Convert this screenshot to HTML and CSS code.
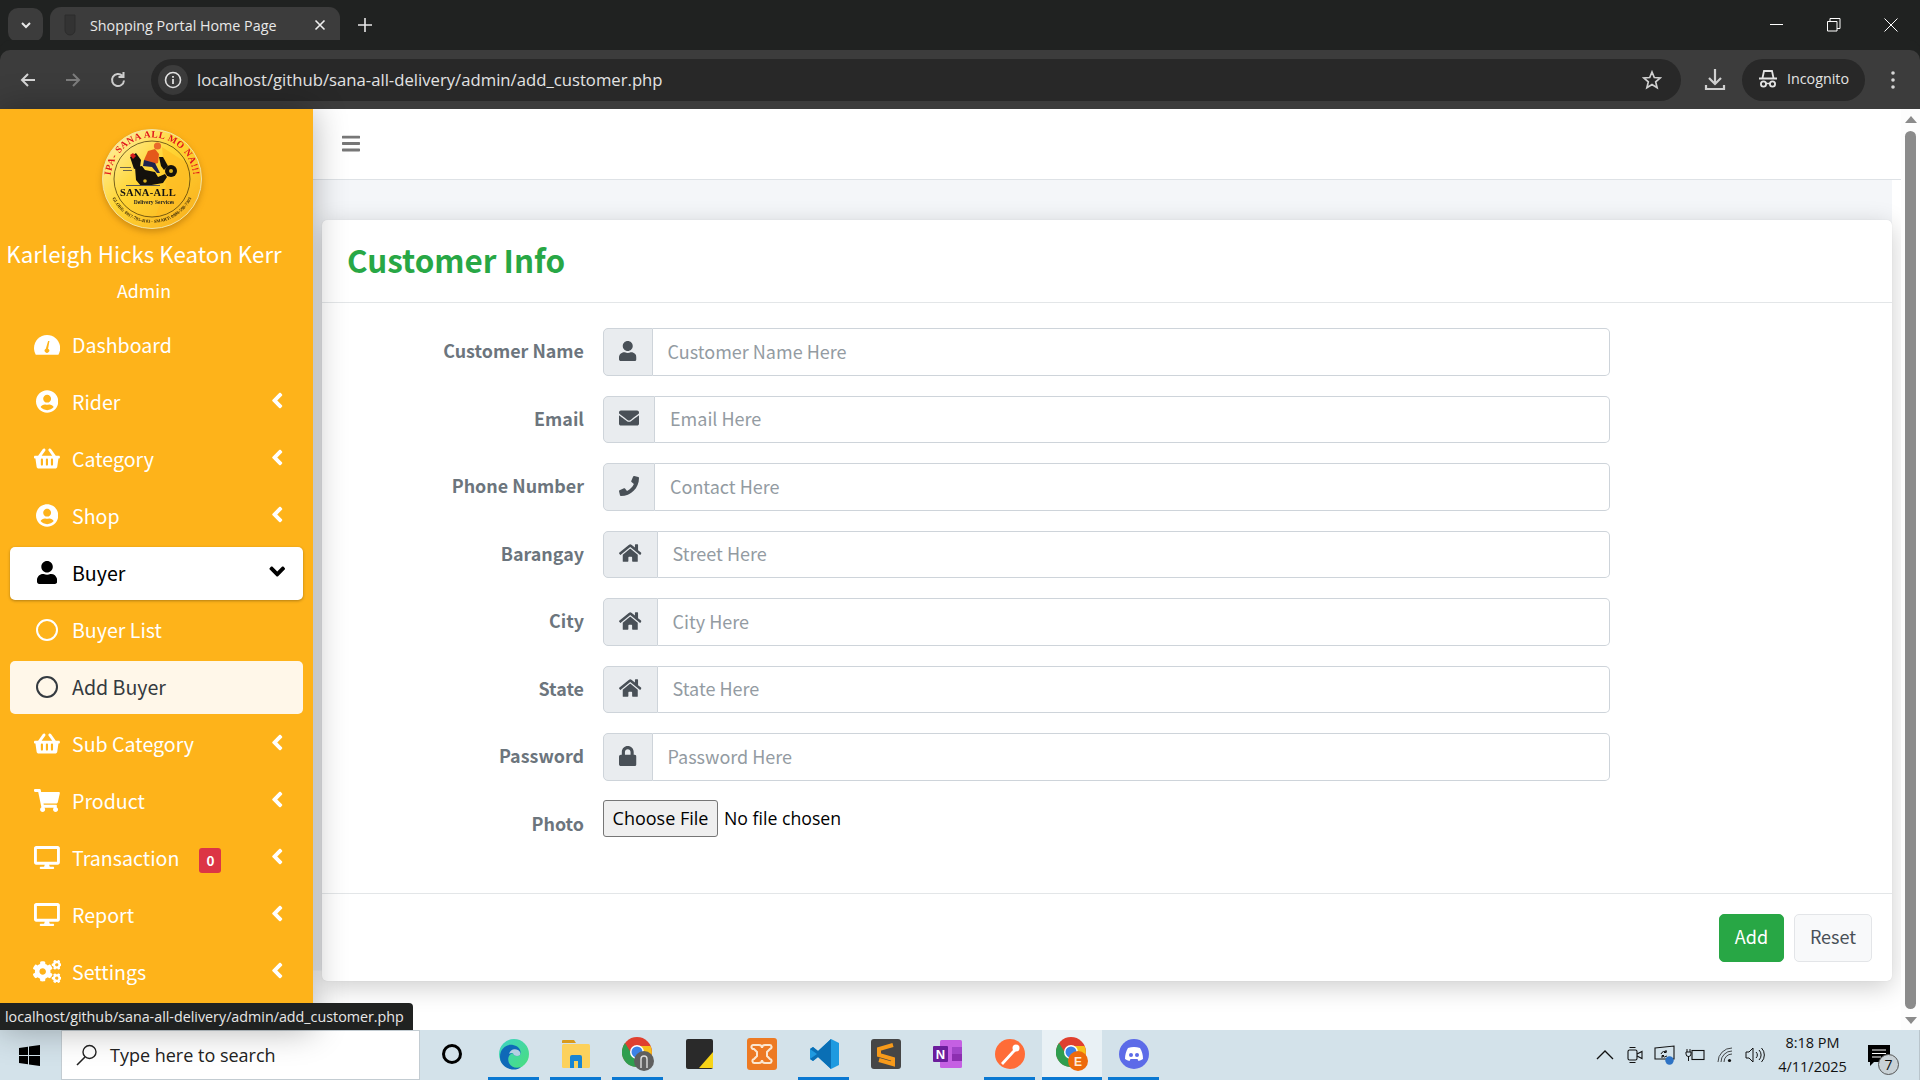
FILE: index.html
```html
<!DOCTYPE html>
<html lang="en">
<head>
  <meta charset="UTF-8" />
  <title>Shopping Portal Home Page</title>
  <link rel="stylesheet" href="styles.css">
</head>
<body>
  <svg class="sprite" aria-hidden="true">
    <symbol id="i-user"><path d="M224 256c70.7 0 128-57.3 128-128S294.7 0 224 0 96 57.3 96 128s57.3 128 128 128zm89.6 32h-16.7c-22.2 10.2-46.9 16-72.9 16s-50.6-5.8-72.9-16h-16.7C60.2 288 0 348.2 0 422.4V464c0 26.5 21.5 48 48 48h352c26.5 0 48-21.5 48-48v-41.6c0-74.2-60.2-134.4-134.4-134.4z"/></symbol>
    <symbol id="i-envelope"><path d="M502.3 190.8c3.9-3.1 9.7-.2 9.7 4.7V400c0 26.5-21.5 48-48 48H48c-26.5 0-48-21.5-48-48V195.6c0-5 5.7-7.8 9.7-4.7 22.4 17.4 52.1 39.5 154.1 113.6 21.1 15.4 56.7 47.8 92.2 47.6 35.7.3 72-32.8 92.3-47.6 102-74.1 131.6-96.3 154-113.7zM256 320c23.2.4 56.6-29.2 73.4-41.4 132.7-96.3 142.8-104.7 173.4-128.7 5.8-4.5 9.2-11.5 9.2-18.9v-19c0-26.5-21.5-48-48-48H48C21.5 64 0 85.5 0 112v19c0 7.4 3.4 14.3 9.2 18.9 30.6 23.9 40.7 32.4 173.4 128.7 16.8 12.2 50.2 41.8 73.4 41.4z"/></symbol>
    <symbol id="i-phone"><path d="M493.4 24.6l-104-24c-11.3-2.6-22.9 3.3-27.5 13.9l-48 112c-4.2 9.8-1.4 21.3 6.9 28l60.6 49.6c-36 76.7-98.9 140.5-177.2 177.2l-49.6-60.6c-6.8-8.3-18.2-11.1-28-6.9l-112 48C3.9 366.5-2 378.1.6 389.4l24 104C27.1 504.2 36.7 512 48 512c256.1 0 464-207.5 464-464 0-11.2-7.7-20.9-18.6-23.4z"/></symbol>
    <symbol id="i-home"><path d="M280.37 148.26L96 300.11V464a16 16 0 0 0 16 16l112.06-.29a16 16 0 0 0 15.92-16V368a16 16 0 0 1 16-16h64a16 16 0 0 1 16 16v95.64a16 16 0 0 0 16 16.05L464 480a16 16 0 0 0 16-16V300L295.67 148.26a12.19 12.19 0 0 0-15.3 0zM571.6 251.47L488 182.56V44.05a12 12 0 0 0-12-12h-56a12 12 0 0 0-12 12v72.61L318.47 43a48 48 0 0 0-61 0L4.34 251.47a12 12 0 0 0-1.6 16.9l25.5 31A12 12 0 0 0 45.15 301l235.22-193.74a12.19 12.19 0 0 1 15.3 0L530.9 301a12 12 0 0 0 16.9-1.6l25.5-31a12 12 0 0 0-1.7-16.93z"/></symbol>
    <symbol id="i-lock"><path d="M400 224h-24v-72C376 68.2 307.8 0 224 0S72 68.2 72 152v72H48c-26.5 0-48 21.5-48 48v192c0 26.5 21.5 48 48 48h352c26.5 0 48-21.5 48-48V272c0-26.5-21.5-48-48-48zm-104 0H152v-72c0-39.7 32.3-72 72-72s72 32.3 72 72v72z"/></symbol>
    <symbol id="i-user-circle"><path d="M248 8C111 8 0 119 0 256s111 248 248 248 248-111 248-248S385 8 248 8zm0 96c48.6 0 88 39.4 88 88s-39.4 88-88 88-88-39.4-88-88 39.4-88 88-88zm0 344c-58.7 0-111.3-26.6-146.5-68.2 18.8-35.4 55.6-59.8 98.5-59.8 2.4 0 4.8.4 7.1 1.1 13 4.2 26.6 6.9 40.9 6.9 14.3 0 28-2.7 40.9-6.9 2.3-.7 4.7-1.1 7.1-1.1 42.9 0 79.7 24.4 98.5 59.8C359.3 421.4 306.7 448 248 448z"/></symbol>
    <symbol id="i-basket"><path d="M576 216v16c0 13.255-10.745 24-24 24h-8l-26.113 182.788C514.509 462.435 494.257 480 470.37 480H105.63c-23.887 0-44.139-17.565-47.518-41.212L32 256h-8c-13.255 0-24-10.745-24-24v-16c0-13.255 10.745-24 24-24h67.341l106.78-146.821c10.395-14.292 30.407-17.453 44.701-7.058 14.293 10.395 17.453 30.408 7.058 44.701L170.477 192h235.046L326.12 82.821c-10.395-14.292-7.234-34.306 7.059-44.701 14.291-10.395 34.306-7.235 44.701 7.058L484.659 192H552c13.255 0 24 10.745 24 24zM312 392V280c0-13.255-10.745-24-24-24s-24 10.745-24 24v112c0 13.255 10.745 24 24 24s24-10.745 24-24zm112 0V280c0-13.255-10.745-24-24-24s-24 10.745-24 24v112c0 13.255 10.745 24 24 24s24-10.745 24-24zm-224 0V280c0-13.255-10.745-24-24-24s-24 10.745-24 24v112c0 13.255 10.745 24 24 24s24-10.745 24-24z"/></symbol>
    <symbol id="i-cart"><path d="M528.12 301.319l47.273-208C578.806 78.301 567.391 64 551.99 64H159.208l-9.166-44.81C147.758 8.021 137.93 0 126.529 0H24C10.745 0 0 10.745 0 24v16c0 13.255 10.745 24 24 24h69.883l70.248 343.435C147.325 417.1 136 435.222 136 456c0 30.928 25.072 56 56 56s56-25.072 56-56c0-15.674-6.447-29.835-16.824-40h209.647C430.447 426.165 424 440.326 424 456c0 30.928 25.072 56 56 56s56-25.072 56-56c0-22.172-12.888-41.332-31.579-50.405l5.517-24.276c3.413-15.018-8.002-29.319-23.403-29.319H218.117l-6.545-32h293.145c11.206 0 20.92-7.754 23.403-18.681z"/></symbol>
    <symbol id="i-desktop"><path d="M528 0H48C21.5 0 0 21.5 0 48v320c0 26.5 21.5 48 48 48h192l-16 48h-72c-13.3 0-24 10.7-24 24s10.7 24 24 24h272c13.3 0 24-10.7 24-24s-10.7-24-24-24h-72l-16-48h192c26.5 0 48-21.5 48-48V48c0-26.5-21.5-48-48-48zm-16 352H64V64h448v288z"/></symbol>
    <symbol id="i-cogs"><path d="M512.1 191l-8.2 14.3c-3 5.3-9.4 7.5-15.1 5.4-11.8-4.4-22.6-10.7-32.1-18.6-4.6-3.8-5.8-10.5-2.8-15.7l8.2-14.3c-6.9-8-12.3-17.3-15.9-27.4h-16.5c-6 0-11.2-4.3-12.2-10.3-2-12-2.1-24.6 0-37.1 1-6 6.2-10.4 12.2-10.4h16.5c3.6-10.1 9-19.4 15.9-27.4l-8.2-14.3c-3-5.2-1.9-11.9 2.8-15.7 9.5-7.9 20.4-14.2 32.1-18.6 5.7-2.1 12.1.1 15.1 5.4l8.2 14.3c10.5-1.9 21.2-1.9 31.7 0L552 6.3c3-5.3 9.4-7.5 15.1-5.4 11.8 4.4 22.6 10.7 32.1 18.6 4.6 3.8 5.8 10.5 2.8 15.7l-8.2 14.3c6.9 8 12.3 17.3 15.9 27.4h16.5c6 0 11.2 4.3 12.2 10.3 2 12 2.1 24.6 0 37.1-1 6-6.2 10.4-12.2 10.4h-16.5c-3.6 10.1-9 19.4-15.9 27.4l8.2 14.3c3 5.2 1.9 11.9-2.8 15.7-9.5 7.9-20.4 14.2-32.1 18.6-5.7 2.1-12.1-.1-15.1-5.4l-8.2-14.3c-10.4 1.9-21.2 1.9-31.7 0zm-10.5-58.8c38.5 29.6 82.4-14.3 52.8-52.8-38.5-29.7-82.4 14.3-52.8 52.8zM386.3 286.1l33.7 16.8c10.1 5.8 14.5 18.1 10.5 29.1-8.9 24.2-26.4 46.4-42.6 65.8-7.4 8.9-20.2 11.1-30.3 5.3l-29.1-16.8c-16 13.7-34.6 24.6-54.9 31.7v33.6c0 11.6-8.3 21.6-19.7 23.6-24.6 4.2-50.4 4.4-75.9 0-11.5-2-20-11.9-20-23.6V418c-20.3-7.2-38.9-18-54.9-31.7L74 403c-10 5.8-22.9 3.6-30.3-5.3-16.2-19.4-33.3-41.6-42.2-65.7-4-10.9.4-23.2 10.5-29.1l33.3-16.8c-3.9-20.9-3.9-42.4 0-63.4L12 205.8c-10.1-5.8-14.6-18.1-10.5-29 8.9-24.2 26-46.4 42.2-65.8 7.4-8.9 20.2-11.1 30.3-5.3l29.1 16.8c16-13.7 34.6-24.6 54.9-31.7V57.1c0-11.5 8.2-21.5 19.6-23.5 24.6-4.2 50.5-4.4 76-.1 11.5 2 20 11.9 20 23.6v33.6c20.3 7.2 38.9 18 54.9 31.7l29.1-16.8c10-5.8 22.9-3.6 30.3 5.3 16.2 19.4 33.2 41.6 42.1 65.8 4 10.9.1 23.2-10 29.1l-33.7 16.8c3.9 21 3.9 42.5 0 63.5zm-117.6 21.1c59.2-77-28.7-164.9-105.7-105.7-59.2 77 28.7 164.9 105.7 105.7zm243.4 182.7l-8.2 14.3c-3 5.3-9.4 7.5-15.1 5.4-11.8-4.4-22.6-10.7-32.1-18.6-4.6-3.8-5.8-10.5-2.8-15.7l8.2-14.3c-6.9-8-12.3-17.3-15.9-27.4h-16.5c-6 0-11.2-4.3-12.2-10.3-2-12-2.1-24.6 0-37.1 1-6 6.2-10.4 12.2-10.4h16.5c3.6-10.1 9-19.4 15.9-27.4l-8.2-14.3c-3-5.2-1.9-11.9 2.8-15.7 9.5-7.9 20.4-14.2 32.1-18.6 5.7-2.1 12.1.1 15.1 5.4l8.2 14.3c10.5-1.9 21.2-1.9 31.7 0l8.2-14.3c3-5.3 9.4-7.5 15.1-5.4 11.8 4.4 22.6 10.7 32.1 18.6 4.6 3.8 5.8 10.5 2.8 15.7l-8.2 14.3c6.9 8 12.3 17.3 15.9 27.4h16.5c6 0 11.2 4.3 12.2 10.3 2 12 2.1 24.6 0 37.1-1 6-6.2 10.4-12.2 10.4h-16.5c-3.6 10.1-9 19.4-15.9 27.4l8.2 14.3c3 5.2 1.9 11.9-2.8 15.7-9.5 7.9-20.4 14.2-32.1 18.6-5.7 2.1-12.1-.1-15.1-5.4l-8.2-14.3c-10.4 1.9-21.2 1.9-31.7 0zM501.6 431c38.5 29.6 82.4-14.3 52.8-52.8-38.5-29.6-82.4 14.3-52.8 52.8z"/></symbol>
    <symbol id="i-angle"><path d="M31.7 239l136-136c9.4-9.4 24.6-9.4 33.9 0l22.6 22.6c9.4 9.4 9.4 24.6 0 33.9L127.9 256l96.4 96.4c9.4 9.4 9.4 24.6 0 33.9L201.7 409c-9.4 9.4-24.6 9.4-33.9 0l-136-136c-9.5-9.4-9.5-24.6-.1-34z"/></symbol>
    <symbol id="i-bars"><path d="M16 132h416c8.837 0 16-7.163 16-16V76c0-8.837-7.163-16-16-16H16C7.163 60 0 67.163 0 76v40c0 8.837 7.163 16 16 16zm0 160h416c8.837 0 16-7.163 16-16v-40c0-8.837-7.163-16-16-16H16c-8.837 0-16 7.163-16 16v40c0 8.837 7.163 16 16 16zm0 160h416c8.837 0 16-7.163 16-16v-40c0-8.837-7.163-16-16-16H16c-8.837 0-16 7.163-16 16v40c0 8.837 7.163 16 16 16z"/></symbol>
  </svg>

  <!-- browser window top -->
  <div class="tabstrip">
    <div class="tab-search">
      <svg width="14" height="14" viewBox="0 0 14 14"><path d="M3 5l4 4 4-4" fill="none" stroke="#e8e8e8" stroke-width="2"/></svg>
    </div>
    <div class="tab">
      <svg class="favicon" width="12" height="22" viewBox="0 0 12 22"><path d="M1 1h10v15a5 5 0 0 1-10 0z" fill="#333" stroke="#2c2c2c"/></svg>
      <span class="tab-title">Shopping Portal Home Page</span>
      <svg width="12" height="12" viewBox="0 0 12 12"><path d="M1.5 1.5l9 9M10.5 1.5l-9 9" stroke="#eee" stroke-width="1.6"/></svg>
    </div>
    <svg class="new-tab" width="14" height="14" viewBox="0 0 14 14"><path d="M7 0v14M0 7h14" stroke="#e8e8e8" stroke-width="1.6"/></svg>
    <div class="win-btns">
      <svg width="14" height="14" viewBox="0 0 14 14"><path d="M0 6.5h13" stroke="#fff" stroke-width="1"/></svg>
      <svg width="14" height="14" viewBox="0 0 14 14"><path d="M.5 3.5h9.5v9.500H.5zM3 3.500V.5h10v10h-3" fill="none" stroke="#fff" stroke-width="1"/></svg>
      <svg width="14" height="14" viewBox="0 0 14 14"><path d="M.5.5l13 13M13.500.5l-13 13" stroke="#fff" stroke-width="1"/></svg>
    </div>
  </div>

  <div class="toolbar">
    <svg class="tool" width="18" height="18" viewBox="0 0 18 18"><path d="M16 9H3M9 3L3 9l6 6" fill="none" stroke="#d6d6d6" stroke-width="2"/></svg>
    <svg class="tool" width="18" height="18" viewBox="0 0 18 18"><path d="M2 9h13M9 3l6 6-6 6" fill="none" stroke="#7d7d7d" stroke-width="2"/></svg>
    <svg class="tool" width="18" height="18" viewBox="0 0 18 18"><path d="M15 9.500A6 6 0 1 1 13.300 4.800M14.500 1v5h-5" fill="none" stroke="#cfcfcf" stroke-width="2"/></svg>
    <div class="omnibox">
      <span class="site-info">
        <svg width="18" height="18" viewBox="0 0 18 18"><circle cx="9" cy="9" r="7.500" fill="none" stroke="#e3e3e3" stroke-width="1.600"/><path d="M9 8v5M9 5v1.800" stroke="#e3e3e3" stroke-width="1.800"/></svg>
      </span>
      <span class="url">localhost/github/sana-all-delivery/admin/add_customer.php</span>
      <svg class="star" width="20" height="20" viewBox="0 0 20 20"><path d="M10 2l2.300 5.500 5.900.5-4.500 3.900 1.400 5.800L10 14.600 4.900 17.700l1.400-5.800L1.800 8l5.900-.5z" fill="none" stroke="#d0d0d0" stroke-width="1.700"/></svg>
    </div>
    <svg class="download" width="22" height="24" viewBox="0 0 22 24"><path d="M11 1v14M5 10l6 6 6-6" fill="none" stroke="#d0d0d0" stroke-width="2.200"/><path d="M2 17v4h18v-4" fill="none" stroke="#d0d0d0" stroke-width="2.200"/></svg>
    <div class="incognito">
      <svg width="20" height="20" viewBox="0 0 20 20"><path d="M1 9.500h18M4.500 9l1.500-7h8l1.500 7" fill="none" stroke="#e3e3e3" stroke-width="1.800"/><circle cx="5.500" cy="15" r="2.600" fill="none" stroke="#e3e3e3" stroke-width="1.800"/><circle cx="14.500" cy="15" r="2.600" fill="none" stroke="#e3e3e3" stroke-width="1.800"/><path d="M8 14.500h4" stroke="#e3e3e3" stroke-width="1.500"/></svg>
      <span>Incognito</span>
    </div>
    <svg class="kebab" width="6" height="20" viewBox="0 0 6 20"><circle cx="3" cy="3" r="1.800" fill="#d6d6d6"/><circle cx="3" cy="10" r="1.800" fill="#d6d6d6"/><circle cx="3" cy="17" r="1.800" fill="#d6d6d6"/></svg>
  </div>

  <div class="page">
    <aside class="sidebar">
      <svg class="logo" width="100" height="100" viewBox="0 0 100 100">
        <defs>
          <linearGradient id="logo-bg" x1="0" y1="0" x2="1" y2="1">
            <stop offset="0" stop-color="#fff6b8"/>
            <stop offset=".45" stop-color="#ffd534"/>
            <stop offset="1" stop-color="#f8ab1a"/>
          </linearGradient>
          <path id="logo-top" d="M8.500 50a41.500 41.500 0 0 1 83 0"/>
          <path id="logo-bottom" d="M6 50a44 44 0 0 0 88 0"/>
        </defs>
        <circle cx="50" cy="50" r="49.500" fill="url(#logo-bg)" stroke="#f1e3a6"/>
        <path d="M60 18l28 18-6 34-30 22 12-34z" fill="#ffbb22" opacity=".65"/>
        <circle cx="50" cy="50" r="38" fill="none" stroke="#3d2c05" stroke-width=".7"/>
        <text class="logo-arc"><textPath href="#logo-top" startOffset="50%" text-anchor="middle">IPA- SANA ALL MO NA!!!</textPath></text>
        <text class="logo-phone"><textPath href="#logo-bottom" startOffset="50%" text-anchor="middle">GLOBE: 0917-795-4103 · SMART: 0998-590-7303</textPath></text>
        <!-- scooter and rider -->
        <path d="M18 38.500h11M21 41.500h9" stroke="#444" stroke-width=".8"/>
        <path d="M33 38l7-1 3 4 10 2 3 5 7-3 2 3-4 6-17 3H39l-5-6z" fill="#14110c"/>
        <path d="M28 28l6-4 5 7-1 7-6 2z" fill="#14110c"/>
        <path d="M28 26l3-2 3 3-3 3z" fill="#d81c1c"/>
        <circle cx="43" cy="52" r="5" fill="#14110c"/><circle cx="43" cy="52" r="1.800" fill="#d9b21f"/>
        <circle cx="69" cy="42" r="6" fill="#14110c"/><circle cx="69" cy="42" r="2" fill="#d9b21f"/>
        <path d="M57 28l4 0 5 9-4 4-3-4z" fill="#14110c"/>
        <path d="M42 31l4-9 7-2 4 5-1 9-7 2z" fill="#e4591a"/>
        <path d="M42 31l11 3 5 10h-3l-5-6-9-1z" fill="#1d2350"/>
        <circle cx="55.500" cy="17" r="3.600" fill="#e86a2a"/>
        <path d="M24 56.500h34" stroke="#555" stroke-width="1"/>
        <text class="logo-name" x="46" y="67" text-anchor="middle">SANA-ALL</text>
        <text class="logo-sub" x="52" y="75" text-anchor="middle">Delivery Services</text>
      </svg>
      <div class="user-panel">
        <div class="user-name">Karleigh Hicks Keaton Kerr</div>
        <div class="user-role">Admin</div>
      </div>
      <nav class="nav">
        <a href="#" class="nav-item">
          <span class="nav-icon"><svg class="ico ico-gauge" viewBox="0 0 576 440"><path d="M288 0C129 0 0 129 0 288c0 53 14 102 39 145h498c25-43 39-92 39-145C576 129 447 0 288 0z"/><path d="M340 130l-30 170a50 50 0 1 1-50 0l50-170z" fill="#feb31a"/></svg></span>
          <span>Dashboard</span>
        </a>
        <a href="#" class="nav-item">
          <span class="nav-icon"><svg class="ico" viewBox="0 0 496 512"><use href="#i-user-circle"/></svg></span>
          <span>Rider</span>
          <svg class="angle" viewBox="0 0 256 512"><use href="#i-angle"/></svg>
        </a>
        <a href="#" class="nav-item">
          <span class="nav-icon"><svg class="ico" viewBox="0 0 576 512"><use href="#i-basket"/></svg></span>
          <span>Category</span>
          <svg class="angle" viewBox="0 0 256 512"><use href="#i-angle"/></svg>
        </a>
        <a href="#" class="nav-item">
          <span class="nav-icon"><svg class="ico" viewBox="0 0 496 512"><use href="#i-user-circle"/></svg></span>
          <span>Shop</span>
          <svg class="angle" viewBox="0 0 256 512"><use href="#i-angle"/></svg>
        </a>
        <a href="#" class="nav-item open">
          <span class="nav-icon"><svg class="ico" viewBox="0 0 448 512"><use href="#i-user"/></svg></span>
          <span>Buyer</span>
          <svg class="angle down" viewBox="0 0 256 512"><use href="#i-angle"/></svg>
        </a>
        <a href="#" class="nav-item">
          <span class="nav-icon"><span class="ring"></span></span>
          <span>Buyer List</span>
        </a>
        <a href="#" class="nav-item current">
          <span class="nav-icon"><span class="ring"></span></span>
          <span>Add Buyer</span>
        </a>
        <a href="#" class="nav-item">
          <span class="nav-icon"><svg class="ico" viewBox="0 0 576 512"><use href="#i-basket"/></svg></span>
          <span>Sub Category</span>
          <svg class="angle" viewBox="0 0 256 512"><use href="#i-angle"/></svg>
        </a>
        <a href="#" class="nav-item">
          <span class="nav-icon"><svg class="ico" viewBox="0 0 576 512"><use href="#i-cart"/></svg></span>
          <span>Product</span>
          <svg class="angle" viewBox="0 0 256 512"><use href="#i-angle"/></svg>
        </a>
        <a href="#" class="nav-item">
          <span class="nav-icon"><svg class="ico" viewBox="0 0 576 512"><use href="#i-desktop"/></svg></span>
          <span>Transaction</span>
          <span class="badge">0</span>
          <svg class="angle" viewBox="0 0 256 512"><use href="#i-angle"/></svg>
        </a>
        <a href="#" class="nav-item">
          <span class="nav-icon"><svg class="ico" viewBox="0 0 576 512"><use href="#i-desktop"/></svg></span>
          <span>Report</span>
          <svg class="angle" viewBox="0 0 256 512"><use href="#i-angle"/></svg>
        </a>
        <a href="#" class="nav-item">
          <span class="nav-icon"><svg class="ico" viewBox="0 0 640 512"><use href="#i-cogs"/></svg></span>
          <span>Settings</span>
          <svg class="angle" viewBox="0 0 256 512"><use href="#i-angle"/></svg>
        </a>
      </nav>
    </aside>

    <main class="main">
      <div class="navbar">
        <svg class="bars" viewBox="0 0 448 512"><use href="#i-bars"/></svg>
      </div>
      <div class="content">
        <div class="card">
          <div class="card-header"><h1>Customer Info</h1></div>
          <form class="card-body">
            <div class="form-row">
              <label>Customer Name</label>
              <div class="input-group">
                <span class="addon"><svg viewBox="0 0 448 512"><use href="#i-user"/></svg></span>
                <input type="text" placeholder="Customer Name Here">
              </div>
            </div>
            <div class="form-row">
              <label>Email</label>
              <div class="input-group">
                <span class="addon"><svg viewBox="0 0 512 512"><use href="#i-envelope"/></svg></span>
                <input type="text" placeholder="Email Here">
              </div>
            </div>
            <div class="form-row">
              <label>Phone Number</label>
              <div class="input-group">
                <span class="addon"><svg viewBox="0 0 512 512"><use href="#i-phone"/></svg></span>
                <input type="text" placeholder="Contact Here">
              </div>
            </div>
            <div class="form-row">
              <label>Barangay</label>
              <div class="input-group">
                <span class="addon"><svg viewBox="0 0 576 512"><use href="#i-home"/></svg></span>
                <input type="text" placeholder="Street Here">
              </div>
            </div>
            <div class="form-row">
              <label>City</label>
              <div class="input-group">
                <span class="addon"><svg viewBox="0 0 576 512"><use href="#i-home"/></svg></span>
                <input type="text" placeholder="City Here">
              </div>
            </div>
            <div class="form-row">
              <label>State</label>
              <div class="input-group">
                <span class="addon"><svg viewBox="0 0 576 512"><use href="#i-home"/></svg></span>
                <input type="text" placeholder="State Here">
              </div>
            </div>
            <div class="form-row">
              <label>Password</label>
              <div class="input-group">
                <span class="addon"><svg viewBox="0 0 448 512"><use href="#i-lock"/></svg></span>
                <input type="text" placeholder="Password Here">
              </div>
            </div>
            <div class="form-row">
              <label>Photo</label>
              <input type="file" class="file-input">
            </div>
          </form>
          <div class="card-footer">
            <button class="btn btn-add">Add</button>
            <button class="btn btn-reset">Reset</button>
          </div>
        </div>
      </div>
    </main>

    <div class="scrollbar">
      <span class="arrow-up"></span>
      <span class="thumb"></span>
      <span class="arrow-down"></span>
    </div>

    <div class="status-bubble">localhost/github/sana-all-delivery/admin/add_customer.php</div>
  </div>

  <!-- windows taskbar -->
  <footer class="taskbar">
    <div class="start">
      <svg width="21" height="21" viewBox="0 0 21 21"><path d="M0 3l9-1.300V10H0zM10 1.500L21 0v10H10zM0 11h9v8.300L0 18zM10 11h11v10l-11-1.500z" fill="#000"/></svg>
    </div>
    <div class="search-box">
      <svg width="22" height="22" viewBox="0 0 22 22"><circle cx="13.500" cy="8" r="6.500" fill="none" stroke="#222" stroke-width="1.400"/><path d="M9 13l-8 8" stroke="#222" stroke-width="1.600"/></svg>
      <span>Type here to search</span>
    </div>
    <div class="apps">
      <div class="app">
        <svg width="22" height="22" viewBox="0 0 22 22"><circle cx="11" cy="11" r="8.500" fill="none" stroke="#000" stroke-width="3"/></svg>
      </div>
      <div class="app running">
        <svg width="30" height="32" viewBox="0 0 30 32">
          <defs><linearGradient id="edge-a" x1="0" y1="0" x2="1" y2="1"><stop offset="0" stop-color="#3dd2c4"/><stop offset="1" stop-color="#4ade7b"/></linearGradient></defs>
          <circle cx="15" cy="16" r="15" fill="url(#edge-a)"/>
          <path d="M1 19C1 10 8 6 14 7c6 1 9 6 7 10-2 2-7 1-7-2-4 1-6 5-4 10 2 4 7 6 12 4-3 3-8 3-11 2C5 29 1 25 1 19z" fill="#0f69b8"/>
          <path d="M10 16c1-4 5-6 9-4 2 1 3 3 2 5-2 2-7 1-7-2-2 0-3 0-4 1z" fill="#d3e2ea" opacity=".85"/>
        </svg>
      </div>
      <div class="app running">
        <svg width="30" height="32" viewBox="0 0 30 32"><path d="M1 3a1 1 0 0 1 1-1h11l2 3h-14z" fill="#d99a1c"/><rect x="1" y="6" width="28" height="24" rx="1.500" fill="#fcd15c"/><path d="M9 30V19a2 2 0 0 1 2-2h8a2 2 0 0 1 2 2v11h-4v-7h-4v7z" fill="#1985d3"/></svg>
      </div>
      <div class="app running">
        <svg width="32" height="34" viewBox="0 0 32 34">
          <circle cx="15" cy="15" r="15" fill="#e0402f"/>
          <path d="M15 15L2 23a15 15 0 0 0 13 7z" fill="#2f9e4f"/><path d="M2 23A15 15 0 0 1 3 6l8 13z" fill="#2f9e4f"/>
          <path d="M15 9h13.500a15 15 0 0 1-11 21l6-13z" fill="#f7c01a"/>
          <circle cx="15" cy="15" r="7" fill="#fff"/><circle cx="15" cy="15" r="5.500" fill="#3b82e6"/>
          <circle cx="22" cy="24" r="10" fill="#5f5f5f"/><path d="M19 31v-9a3 3 0 0 1 6 0v9" fill="none" stroke="#ddd" stroke-width="1.400"/>
        </svg>
      </div>
      <div class="app">
        <svg width="27" height="30" viewBox="0 0 27 30"><rect width="27" height="30" rx="2" fill="#2a2a2a"/><path d="M27 13v6L17 29h-4z" fill="#f7d417"/><path d="M15 29l12-15v15z" fill="#f7d417"/></svg>
      </div>
      <div class="app">
        <svg width="30" height="32" viewBox="0 0 30 32"><rect width="30" height="32" rx="3" fill="#ed7a23"/><path d="M8 7h4a3 3 0 0 1 3 3 3 3 0 0 1 3-3h4a2 2 0 0 1 1 4l-3 3v4l3 3a2 2 0 0 1-1 4h-4a3 3 0 0 1-3-3 3 3 0 0 1-3 3H8a2 2 0 0 1-1-4l3-3v-4l-3-3a2 2 0 0 1-1-4z" fill="none" stroke="#fbe7d0" stroke-width="2"/></svg>
      </div>
      <div class="app running">
        <svg width="30" height="32" viewBox="0 0 30 32"><path d="M22 1l8 4v22l-8 4-13-12-5 4-3-2V11l3-2 5 4zM22 9l-8 7 8 7z" fill="#1e9ae0"/><path d="M22 1L9 13 4 9 1 11l7 5-7 5 3 2 5-4 13 12z" fill="#0a6fb5"/></svg>
      </div>
      <div class="app">
        <svg width="30" height="30" viewBox="0 0 30 30"><rect width="30" height="30" rx="3" fill="#464646"/><path d="M22 6L8 10v6l14 4v5L8 21" fill="none" stroke="#f79a1a" stroke-width="4"/></svg>
      </div>
      <div class="app">
        <svg width="30" height="30" viewBox="0 0 30 30"><rect x="7" y="1" width="22" height="28" rx="1.500" fill="#c560e3"/><rect x="19" y="8" width="10" height="7" fill="#a245c9"/><rect x="19" y="15" width="10" height="7" fill="#8c2fb0"/><rect y="7" width="15" height="16" rx="1" fill="#6b1d9c"/><text class="one-n" x="7.500" y="20" text-anchor="middle">N</text></svg>
      </div>
      <div class="app running">
        <svg width="30" height="30" viewBox="0 0 30 30"><circle cx="15" cy="15" r="15" fill="#ff6c37"/><path d="M6 24l11-12 2 2L8 26zM17 12l5-5 2 2-5 5z" fill="#fff"/><circle cx="21" cy="9" r="3.500" fill="#fff"/></svg>
      </div>
      <div class="app running active">
        <svg width="32" height="34" viewBox="0 0 32 34">
          <circle cx="15" cy="15" r="15" fill="#e0402f"/>
          <path d="M15 15L2 23a15 15 0 0 0 13 7z" fill="#2f9e4f"/><path d="M2 23A15 15 0 0 1 3 6l8 13z" fill="#2f9e4f"/>
          <path d="M15 9h13.500a15 15 0 0 1-11 21l6-13z" fill="#f7c01a"/>
          <circle cx="15" cy="15" r="7" fill="#fff"/><circle cx="15" cy="15" r="5.500" fill="#3b82e6"/>
          <circle cx="22" cy="24" r="10" fill="#ed6a0c"/><text class="chrome-e" x="22" y="28.500" text-anchor="middle">E</text>
        </svg>
      </div>
      <div class="app running">
        <svg width="30" height="30" viewBox="0 0 30 30"><circle cx="15" cy="15" r="15" fill="#5c6be8"/><path d="M9 9c4-1.500 8-1.500 12 0 2 3 3 7 3 11-1.500 1-3 1.700-4.500 2l-1-2h-7l-1 2c-1.500-.3-3-1-4.500-2 0-4 1-8 3-11z" fill="#fff"/><circle cx="12" cy="16" r="2" fill="#5c6be8"/><circle cx="18" cy="16" r="2" fill="#5c6be8"/></svg>
      </div>
    </div>
    <div class="tray">
      <span class="tray-icon"><svg width="18" height="10" viewBox="0 0 18 10"><path d="M1 9l8-8 8 8" fill="none" stroke="#111" stroke-width="1.300"/></svg></span>
      <span class="tray-icon"><svg width="16" height="18" viewBox="0 0 16 18"><rect x="1" y="4" width="9" height="10" rx="1.500" fill="none" stroke="#111" stroke-width="1.100"/><path d="M10 8l5-2.500v7L10 10M2.500 1.500h6M2.500 16.500h6" fill="none" stroke="#111" stroke-width="1.100"/></svg></span>
      <span class="tray-icon"><svg width="22" height="20" viewBox="0 0 22 20"><path d="M1 3l19-2v13H1z" fill="none" stroke="#111" stroke-width="1.100"/><path d="M7 9a4 4 0 0 1 6-2M13 11a4 4 0 0 1-5 0M12 5v2.500h-2M8 13v-2.500h2" fill="none" stroke="#111"/><circle cx="15.500" cy="15.500" r="4.200" fill="#2d72c4"/></svg></span>
      <span class="tray-icon"><svg width="20" height="14" viewBox="0 0 20 14"><rect x="7" y="2.500" width="12" height="9" fill="none" stroke="#111" stroke-width="1.100"/><path d="M2 1v3M5 1v3M1 4h5v2a2 2 0 0 1-5 0zM3.500 8v5" fill="none" stroke="#111"/></svg></span>
      <span class="tray-icon"><svg width="16" height="16" viewBox="0 0 16 16"><path d="M1 15A14 14 0 0 1 15 1M4 15A11 11 0 0 1 15 4M7 15a8 8 0 0 1 8-8" fill="none" stroke="#111" stroke-width="1" opacity=".75"/><circle cx="12.500" cy="13.500" r="1.600" fill="#111"/></svg></span>
      <span class="tray-icon"><svg width="20" height="16" viewBox="0 0 20 16"><path d="M1 5h3l4-4v14l-4-4H1zM11 5a4 4 0 0 1 0 6M14 3a7 7 0 0 1 0 10M16.500 1a10 10 0 0 1 0 14" fill="none" stroke="#111" stroke-width="1"/></svg></span>
      <div class="clock">
        <div>8:18 PM</div>
        <div>4/11/2025</div>
      </div>
      <div class="notify">
        <svg width="22" height="22" viewBox="0 0 22 22"><path d="M0 0h22v17H6l-4 4v-4H0z" fill="#000"/><path d="M4 5h14M4 8.500h14M4 12h9" stroke="#fff" stroke-width="1"/></svg>
        <span class="notify-count">7</span>
      </div>
    </div>
  </footer>
</body>
</html>
```

FILE: styles.css
```css
* {
  box-sizing: border-box;
}

html, body {
  margin: 0;
  height: 100%;
}

body {
  width: 1920px;
  height: 1080px;
  overflow: hidden;
  display: flex;
  flex-direction: column;
  font-family: "Noto Sans CJK SC", "Liberation Sans", sans-serif;
  font-size: 18px;
  background-color: #fff;
}

.sprite {
  display: none;
}

/* browser chrome */
.tabstrip {
  height: 50px;
  flex: none;
  display: flex;
  background-color: #202221;
  color: #e8e8e8;
  font-family: "Open Sans", sans-serif;
}

.tab-search {
  width: 35px;
  height: 34px;
  margin: 8px 7px 0 8px;
  display: flex;
  align-items: center;
  justify-content: center;
  border-radius: 10px;
  background-color: #3c3c3c;
}

.tab {
  width: 290px;
  height: 43px;
  margin-top: 7px;
  padding: 0 14px 7px 14px;
  display: flex;
  align-items: center;
  border-radius: 11px 11px 0 0;
  background-color: #3c3c3c;
}

.favicon {
  margin-right: 14px;
}

.tab-title {
  flex: 1;
  font-size: 14.300px;
}

.new-tab {
  margin: 18px 0 0 18px;
}

.win-btns {
  margin-left: auto;
  padding: 18px 22px 0 0;
  display: flex;
  gap: 43px;
}

.toolbar {
  height: 59px;
  flex: none;
  display: flex;
  align-items: center;
  padding-left: 19px;
  background-color: #3c3c3c;
  border-top-left-radius: 10px;
  border-top-right-radius: 10px;
  box-shadow: 0 -10px 0 #202221;
  color: #e3e3e3;
  font-family: "Open Sans", sans-serif;
}

.tool {
  margin-right: 27px;
}

.tool:nth-child(3) {
  margin-right: 25px;
}

.omnibox {
  width: 1530px;
  height: 42px;
  margin-left: -1px;
  padding: 0 19px 0 7px;
  display: flex;
  align-items: center;
  border-radius: 21px;
  background-color: #282828;
}

.site-info {
  width: 30px;
  height: 30px;
  margin-right: 9px;
  display: flex;
  align-items: center;
  justify-content: center;
  border-radius: 50%;
  background-color: #3c3c3c;
}

.url {
  flex: 1;
  font-size: 16.700px;
}

.download {
  margin-left: 23px;
}

.incognito {
  width: 123px;
  height: 42px;
  margin-left: 16px;
  padding: 0 0 2px 16px;
  display: flex;
  align-items: center;
  gap: 9px;
  border-radius: 21px;
  background-color: #282828;
  font-size: 14.300px;
}

.kebab {
  margin-left: 25px;
}

/* page */
.page {
  flex: 1;
  min-height: 0;
  display: flex;
  position: relative;
}

.sidebar {
  width: 313px;
  flex: none;
  position: relative;
  z-index: 2;
  padding-top: 20px;
  background-color: #feb31a;
  box-shadow: 0 0 32px rgba(0,0,0,0.3);
  color: #fff;
}

.logo {
  display: block;
  margin-left: 102px;
  filter: drop-shadow(0 3px 3px rgba(120,70,0,0.35));
}

.logo-arc {
  font: bold 9.500px "Liberation Serif", serif;
  fill: #e0141c;
  letter-spacing: .5px;
}

.logo-phone {
  font: bold 4.600px "Liberation Serif", serif;
  fill: #3a2a08;
}

.logo-name {
  font: bold 10.500px "Liberation Serif", serif;
  fill: #111;
  letter-spacing: .3px;
}

.logo-sub {
  font: bold 5.500px "Liberation Serif", serif;
  fill: #222;
}

.user-panel {
  width: 288px;
  margin-top: 8px;
  text-align: center;
}

.user-name {
  font-size: 22.300px;
  line-height: 32px;
  white-space: nowrap;
}

.user-role {
  margin-top: 8px;
  font-size: 17.800px;
  line-height: 26px;
}

.nav {
  margin-top: 16px;
  padding: 0 10px;
}

.nav-item {
  height: 53px;
  margin-bottom: 4px;
  padding: 0 20px 2px;
  display: flex;
  align-items: center;
  border-radius: 5px;
  color: #fff;
  font-size: 19.600px;
  text-decoration: none;
}

.nav-icon {
  width: 34px;
  margin-right: 8px;
  display: flex;
  align-items: center;
  justify-content: center;
}

.ico {
  height: 23px;
  width: auto;
  fill: currentColor;
}

.ico-gauge {
  height: 20px;
}

.ring {
  width: 22px;
  height: 22px;
  border: 2.500px solid currentColor;
  border-radius: 50%;
}

.angle {
  width: 12.500px;
  height: 25px;
  margin: 0 0 2px auto;
  fill: currentColor;
}

.angle.down {
  transform: rotate(-90deg);
}

.nav-item.open {
  background-color: #fff;
  color: #000;
  box-shadow: 0 1px 3px rgba(0,0,0,0.3);
}

.nav-item.current {
  background-color: #fff7e9;
  color: #343a40;
}

.badge {
  width: 22px;
  height: 25px;
  margin: 5px 0 0 20px;
  display: flex;
  align-items: center;
  justify-content: center;
  border-radius: 3px;
  background-color: #dc3545;
  font-size: 13.500px;
  font-weight: 700;
}

.badge + .angle {
  margin-left: auto;
}

.main {
  flex: 1;
  min-width: 0;
  display: flex;
  flex-direction: column;
}

.navbar {
  height: 71px;
  flex: none;
  padding: 0 0 2px 29px;
  display: flex;
  align-items: center;
  border-bottom: 1px solid #dee2e6;
}

.bars {
  width: 18px;
  height: 21px;
  fill: #777;
}

.content {
  flex: 1;
  min-height: 0;
  margin-right: 9px;
  padding: 40px 0 0 9px;
  background: linear-gradient(#f4f6f9 0, #f4f6f9 790px, #fff 791px);
}

.card {
  height: 761px;
  display: flex;
  flex-direction: column;
  border-radius: 5px;
  background-color: #fff;
  box-shadow: 0 0 1px rgba(0,0,0,.125), 0 6px 26px rgba(0,0,0,.2);
}

.card-header {
  height: 83px;
  flex: none;
  padding: 0 0 3px 25px;
  display: flex;
  align-items: center;
  border-bottom: 1px solid #e3e6e8;
}

.card-header h1 {
  margin: 0;
  color: #28a745;
  font-size: 31.400px;
  font-weight: 700;
}

.card-body {
  height: 591px;
  flex: none;
  margin: 0;
  padding-top: 25px;
  border-bottom: 1px solid #e3e6e8;
}

.form-row {
  min-height: 47.500px;
  margin-bottom: 20px;
  display: flex;
  align-items: flex-start;
}

.form-row label {
  width: 262px;
  margin-right: 19px;
  color: #6c757d;
  font-size: 17.900px;
  font-weight: 700;
  line-height: 45.500px;
  text-align: right;
}

.input-group {
  width: 1007px;
  height: 47.500px;
  display: flex;
}

.addon {
  padding: 0 15px 2px;
  display: flex;
  align-items: center;
  border: 1px solid #ced4da;
  border-radius: 5px 0 0 5px;
  background-color: #e9ecef;
}

.addon svg {
  height: 20px;
  width: auto;
  fill: #495057;
}

.input-group input {
  flex: 1;
  min-width: 0;
  padding: 0 15px 2px;
  border: 1px solid #ced4da;
  border-left: none;
  border-radius: 0 5px 5px 0;
  font: inherit;
  color: #495057;
}

.input-group input::placeholder {
  color: #939ba2;
  opacity: 1;
}

.file-input {
  margin-top: -1px;
  font-family: "Open Sans", sans-serif;
  font-size: 17.700px;
  color: #000;
}

.file-input::file-selector-button {
  width: 115px;
  height: 37px;
  margin-right: 6px;
  padding-bottom: 2px;
  border: 1px solid #767676;
  border-radius: 3px;
  background-color: #efefef;
  color: #000;
  font: inherit;
  font-size: 18px;
}

.card-footer {
  flex: 1;
  padding: 20px 20px 0 0;
  display: flex;
  justify-content: flex-end;
  gap: 10px;
}

.btn {
  height: 47.500px;
  padding-bottom: 4px;
  border-radius: 5px;
  font-family: inherit;
  font-size: 18px;
}

.btn-add {
  width: 65px;
  border: 1px solid #28a745;
  background-color: #28a745;
  color: #fff;
}

.btn-reset {
  width: 78px;
  border: 1px solid #e3e5e8;
  background-color: #f8f9fa;
  color: #495057;
}

.scrollbar {
  width: 19px;
  flex: none;
  padding: 7px 0 6px;
  display: flex;
  flex-direction: column;
  align-items: center;
  background-color: #fdfdfd;
}

.thumb {
  width: 11px;
  flex: 1;
  margin: 8px 0;
  border-radius: 6px;
  background-color: #8b8b8b;
}

.arrow-up {
  border: 6px solid transparent;
  border-top: none;
  border-bottom: 7px solid #8b8b8b;
}

.arrow-down {
  border: 6px solid transparent;
  border-bottom: none;
  border-top: 7px solid #8b8b8b;
}

.status-bubble {
  position: absolute;
  left: 0;
  bottom: 0;
  z-index: 3;
  width: 413px;
  height: 27px;
  padding-left: 5px;
  border-radius: 0 4px 0 0;
  background-color: #202221;
  color: #e8e8e8;
  font-family: "Open Sans", sans-serif;
  font-size: 14.300px;
  line-height: 27px;
  white-space: nowrap;
}

/* windows taskbar */
.taskbar {
  height: 50px;
  flex: none;
  display: flex;
  background-color: #d3e2ea;
  color: #111;
  font-family: "Open Sans", sans-serif;
}

.start {
  width: 61px;
  padding-right: 2px;
  display: flex;
  align-items: center;
  justify-content: center;
}

.search-box {
  width: 359px;
  padding-left: 14px;
  display: flex;
  align-items: center;
  gap: 12px;
  border: 1px solid #c3ccd2;
  background-color: #fff;
  font-size: 18px;
  color: #222;
}

.apps {
  margin-left: .500px;
  display: flex;
}

.app {
  width: 51px;
  margin: 0 5.500px;
  display: flex;
  align-items: center;
  justify-content: center;
  padding-bottom: 2px;
}

.app.running {
  box-shadow: inset 0 -3px #0a78d2;
}

.app.active {
  width: 60px;
  margin: 0 1px;
  background-color: #e9f1f5;
}

.one-n {
  font: bold 13px "Liberation Sans", sans-serif;
  fill: #fff;
}

.chrome-e {
  font: bold 12px "Liberation Sans", sans-serif;
  fill: #ffe9d6;
}

.tray {
  margin-left: auto;
  padding-right: 5px;
  display: flex;
  align-items: center;
  border-right: 1px solid #b9c5cc;
}

.tray-icon {
  width: 30px;
  display: flex;
  justify-content: center;
}

.clock {
  width: 85px;
  font-size: 14.500px;
  line-height: 24px;
  text-align: center;
}

.notify {
  width: 59px;
  height: 50px;
  padding: 15px 0 0 13px;
  position: relative;
}

.notify-count {
  position: absolute;
  left: 23px;
  top: 24px;
  width: 21px;
  height: 21px;
  border: 1px solid #555;
  border-radius: 50%;
  background-color: #c8d1d6;
  font-size: 14px;
  line-height: 19px;
  text-align: center;
}
```
